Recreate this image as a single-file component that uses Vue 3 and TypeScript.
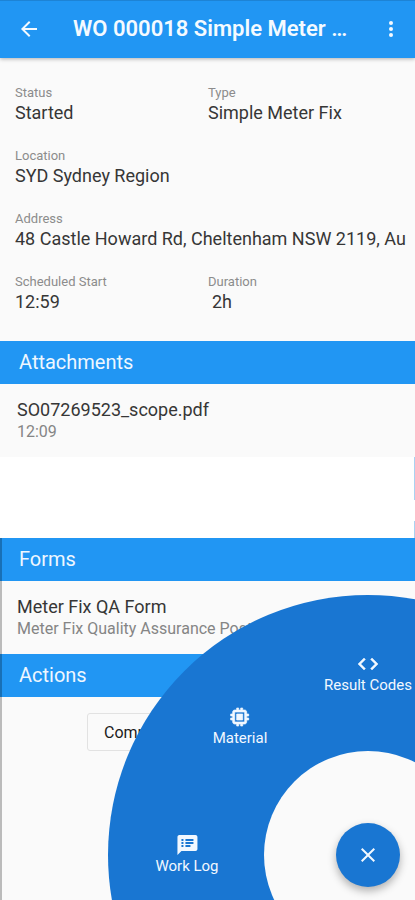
<script setup lang="ts">
interface Field {
  label: string
  value: string
  wide?: boolean
  indent?: boolean
}

interface RadialItem {
  id: 'codes' | 'material' | 'log'
  label: string
  angle: number
}

const fields: Field[] = [
  { label: 'Status', value: 'Started' },
  { label: 'Type', value: 'Simple Meter Fix' },
  { label: 'Location', value: 'SYD Sydney Region', wide: true },
  { label: 'Address', value: '48 Castle Howard Rd, Cheltenham NSW 2119, Au', wide: true },
  { label: 'Scheduled Start', value: '12:59' },
  { label: 'Duration', value: '2h', indent: true },
]

const items: RadialItem[] = [
  { id: 'codes', label: 'Result Codes', angle: 90 },
  { id: 'material', label: 'Material', angle: 135 },
  { id: 'log', label: 'Work Log', angle: 180 },
]

const wheelRadius = 260
const itemRadius = 181

// Places an item on the ring, measured from the wheel's centre.
function place(angle: number) {
  const rad = (angle * Math.PI) / 180
  return {
    left: `${Math.round(wheelRadius + itemRadius * Math.cos(rad))}px`,
    top: `${Math.round(wheelRadius - itemRadius * Math.sin(rad))}px`,
  }
}
</script>

<template>
  <div class="page">
    <header class="bar">
      <button class="icon-button" type="button" aria-label="Back">
        <svg width="24" height="24" viewBox="0 0 24 24" fill="currentColor">
          <path d="M20 11H7.83l5.59-5.59L12 4l-8 8 8 8 1.41-1.41L7.83 13H20z" />
        </svg>
      </button>
      <h1 class="title">WO 000018 Simple Meter …</h1>
      <button class="icon-button" type="button" aria-label="More">
        <svg width="24" height="24" viewBox="0 0 24 24" fill="currentColor">
          <circle cx="12" cy="6" r="2" />
          <circle cx="12" cy="12" r="2" />
          <circle cx="12" cy="18" r="2" />
        </svg>
      </button>
    </header>

    <main>
      <dl class="fields">
        <div v-for="f in fields" :key="f.label" class="field" :class="{ wide: f.wide }">
          <dt>{{ f.label }}</dt>
          <dd :class="{ indent: f.indent }">{{ f.value }}</dd>
        </div>
      </dl>

      <section>
        <h2 class="heading">Attachments</h2>
        <a class="entry" href="#">
          <span class="entry-title">SO07269523_scope.pdf</span>
          <span class="entry-note">12:09</span>
        </a>
      </section>

      <div class="gap">
        <span class="mark tall"></span>
        <span class="mark"></span>
      </div>

      <div class="lower">
        <section>
          <h2 class="heading">Forms</h2>
          <a class="entry" href="#">
            <span class="entry-title">Meter Fix QA Form</span>
            <span class="entry-note">Meter Fix Quality Assurance Post</span>
          </a>
        </section>
        <section>
          <h2 class="heading">Actions</h2>
          <div class="actions">
            <button class="action" type="button">Complete</button>
          </div>
        </section>
      </div>
    </main>

    <nav class="wheel" aria-label="Work order">
      <button
        v-for="item in items"
        :key="item.id"
        class="wheel-item"
        type="button"
        :style="place(item.angle)"
      >
        <svg v-if="item.id === 'codes'" width="24" height="24" viewBox="0 0 24 24" fill="currentColor" stroke="currentColor" stroke-width="0.5">
          <path d="M9.4 16.6 4.8 12l4.6-4.6L8 6l-6 6 6 6zm5.2 0 4.6-4.6-4.6-4.6L16 6l6 6-6 6z" />
        </svg>
        <svg v-else-if="item.id === 'material'" width="24" height="24" viewBox="0 0 24 24" fill="currentColor" stroke="currentColor" stroke-width="0.7">
          <path d="M15 9H9v6h6zm6 2V9h-2V7c0-1.1-.9-2-2-2h-2V3h-2v2h-2V3H9v2H7c-1.1 0-2 .9-2 2v2H3v2h2v2H3v2h2v2c0 1.1.9 2 2 2h2v2h2v-2h2v2h2v-2h2c1.1 0 2-.9 2-2v-2h2v-2h-2v-2zm-4 6H7V7h10z" />
        </svg>
        <svg v-else width="24" height="24" viewBox="0 0 24 24" fill="currentColor">
          <path d="M20 2H4c-1.1 0-1.99.9-1.99 2L2 22l4-4h14c1.1 0 2-.9 2-2V4c0-1.1-.9-2-2-2zM8 14H6v-2h2zm0-3H6V9h2zm0-3H6V6h2zm7 6h-5v-2h5zm3-3h-8V9h8zm0-3h-8V6h8z" />
        </svg>
        <span>{{ item.label }}</span>
      </button>
      <div class="hub">
        <button class="close" type="button" aria-label="Close">
          <svg width="24" height="24" viewBox="0 0 24 24" fill="currentColor">
            <path d="M19 6.41 17.59 5 12 10.59 6.41 5 5 6.41 10.59 12 5 17.59 6.41 19 12 13.41 17.59 19 19 17.59 13.41 12z" />
          </svg>
        </button>
      </div>
    </nav>
  </div>
</template>

<style>
body {
  margin: 0;
  background: #fafafa;
}
</style>

<style scoped>
.page {
  position: relative;
  display: flex;
  flex-direction: column;
  min-height: 100vh;
  overflow: hidden;
  background: #fafafa;
  color: #363636;
  font-family: Roboto, "Liberation Sans", sans-serif;
}

button {
  margin: 0;
  padding: 0;
  border: 0;
  background: none;
  color: inherit;
  font: inherit;
  cursor: pointer;
}

svg {
  display: block;
}

.bar {
  display: flex;
  align-items: center;
  height: 58px;
  padding: 0 12px 0 17px;
  background: #2196f3;
  color: #f4faff;
  box-shadow: 0 1px 4px rgba(0, 0, 0, 0.3), inset 0 1px rgba(0, 0, 0, 0.12);
}

.icon-button {
  flex: none;
}

.title {
  flex: 1;
  margin: 0;
  padding-left: 32px;
  overflow: hidden;
  font-size: 22px;
  font-weight: 600;
  line-height: 28px;
  white-space: nowrap;
}

main {
  display: flex;
  flex: 1;
  flex-direction: column;
}

.fields {
  display: grid;
  grid-template-columns: 193px 1fr;
  row-gap: 23px;
  margin: 0;
  padding: 27px 8px 27px 15px;
}

.field {
  min-width: 0;
}

.wide {
  grid-column: 1 / -1;
}

dt {
  color: #8c8c8c;
  font-size: 13px;
  line-height: 16px;
}

dd {
  margin: 0;
  overflow: hidden;
  font-size: 18px;
  font-weight: 400;
  line-height: 24px;
  white-space: nowrap;
}

.indent {
  padding-left: 4px;
}

.heading {
  margin: 0;
  padding: 0 19px;
  background: #2196f3;
  color: #eef7ff;
  font-size: 20px;
  font-weight: 400;
  line-height: 43px;
}

.entry {
  display: flex;
  flex-direction: column;
  padding: 15px 17px;
  color: inherit;
  text-decoration: none;
}

.entry-title {
  font-size: 18px;
  line-height: 22px;
}

.entry-note {
  color: #858585;
  font-size: 16px;
  line-height: 21px;
}

.gap {
  display: flex;
  flex-direction: column;
  align-items: flex-end;
  justify-content: space-between;
  height: 81px;
  background: #fff;
}

.mark {
  width: 1px;
  height: 17px;
  background: #a9d3f2;
}

.tall {
  height: 43px;
}

.lower {
  flex: 1;
  box-shadow: inset 2px 0 rgba(0, 0, 0, 0.25);
}

.lower .heading {
  box-shadow: inset 2px 0 rgba(0, 0, 0, 0.25);
}

.actions {
  display: flex;
  padding: 16px 87px;
}

.action {
  height: 38px;
  padding: 0 16px;
  border: 1px solid #e2e2e2;
  border-radius: 3px;
  color: #1c1c1c;
  font-size: 16px;
}

.wheel {
  position: absolute;
  right: -213px;
  bottom: -215px;
  display: flex;
  align-items: center;
  justify-content: center;
  width: 520px;
  height: 520px;
  border-radius: 50%;
  background: #1976d2;
}

.wheel-item {
  position: absolute;
  display: flex;
  flex-direction: column;
  align-items: center;
  padding-bottom: 2px;
  color: #f2f8ff;
  font-size: 15px;
  line-height: 18px;
  white-space: nowrap;
  transform: translate(-50%, -50%);
}

.hub {
  display: flex;
  align-items: center;
  justify-content: center;
  width: 208px;
  height: 208px;
  border-radius: 50%;
  background: #fafafa;
}

.close {
  display: flex;
  align-items: center;
  justify-content: center;
  width: 64px;
  height: 64px;
  border-radius: 50%;
  background: #1976d2;
  color: #f2f8ff;
  box-shadow: 0 4px 8px rgba(0, 0, 0, 0.3);
}
</style>
